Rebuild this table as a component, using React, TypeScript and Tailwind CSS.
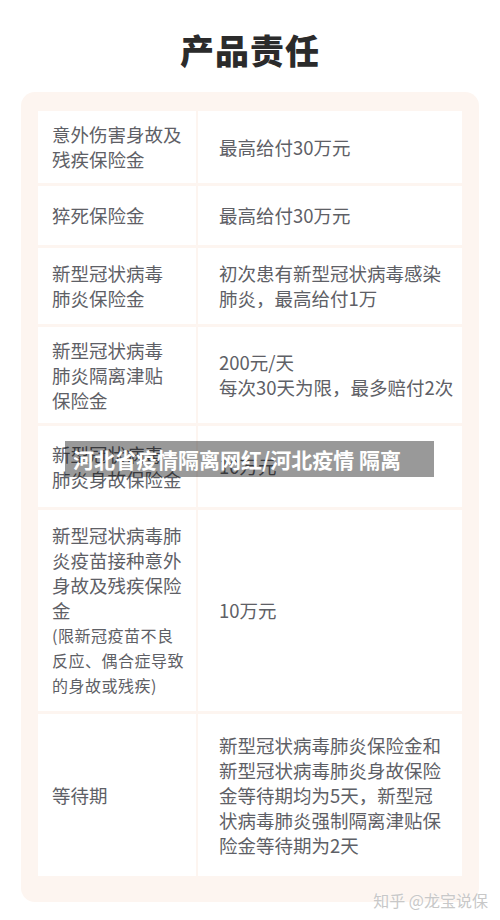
const rows: { left: string[]; right: string[]; h: string; extra?: string[] }[] = [
  { left: ['意外伤害身故及', '残疾保险金'], right: ['最高给付30万元'], h: 'h-[72px]' },
  { left: ['猝死保险金'], right: ['最高给付30万元'], h: 'h-[59px]' },
  { left: ['新型冠状病毒', '肺炎保险金'], right: ['初次患有新型冠状病毒感染', '肺炎，最高给付1万'], h: 'h-[76px]' },
  { left: ['新型冠状病毒', '肺炎隔离津贴', '保险金'], right: ['200元/天', '每次30天为限，最多赔付2次'], h: 'h-[96px]' },
  { left: ['新型冠状病毒', '肺炎身故保险金'], right: ['10万元'], h: 'h-[81px]' },
  {
    left: ['新型冠状病毒肺', '炎疫苗接种意外', '身故及残疾保险', '金'],
    extra: ['(限新冠疫苗不良', '反应、偶合症导致', '的身故或残疾)'],
    right: ['10万元'],
    h: 'h-[201px]',
  },
  {
    left: ['等待期'],
    right: ['新型冠状病毒肺炎保险金和', '新型冠状病毒肺炎身故保险', '金等待期均为5天，新型冠', '状病毒肺炎强制隔离津贴保', '险金等待期为2天'],
    h: 'h-[162px]',
  },
];

export default function App() {
  return (
    <div
      className="relative w-[500px] h-[920px] overflow-hidden bg-white"
      style={{ fontFamily: '"Noto Sans CJK SC", "Noto Sans", sans-serif' }}
    >
      {/* Title */}
      <h1 className="pt-[33px] mb-[25px] text-center text-[34px] leading-[34px] font-black text-[#2b2b2b] tracking-[1px]">
        产品责任
      </h1>

      {/* Card */}
      <div className="mx-[21px] rounded-[14px] bg-[#fdf5f0] pt-[19px] px-[17px] pb-[26px]">
        <div className="flex flex-col gap-[3px]">
          {rows.map((r, i) => (
            <div key={i} className={`flex ${r.h} gap-[2px]`}>
              <div className="w-[158px] bg-white flex flex-col justify-center pl-[14px] text-[18.5px] leading-[25px] text-[#5e6066] whitespace-nowrap">
                {r.left.map((t, j) => (
                  <div key={j}>{t}</div>
                ))}
                {r.extra?.map((t, j) => (
                  <div key={'e' + j} className="text-[16px] leading-[25px] tracking-[0.5px]">
                    {t}
                  </div>
                ))}
              </div>
              <div className="flex-1 bg-white flex flex-col justify-center pl-[21px] text-[18.5px] leading-[25px] text-[#5e6066] whitespace-nowrap">
                {r.right.map((t, j) => (
                  <div key={j}>{t}</div>
                ))}
              </div>
            </div>
          ))}
        </div>
      </div>

      {/* Overlay caption */}
      <div className="absolute top-[441px] left-[65px] w-[369px] h-[36px] bg-black/40 flex items-center pl-[8px]">
        <span className="text-white text-[21px] leading-[24px] font-bold whitespace-nowrap">
          河北省疫情隔离网红/河北疫情 隔离
        </span>
      </div>

      {/* Watermark */}
      <div className="absolute top-[889px] right-[12px] text-[16px] leading-[22px] text-[#c8c8c8] whitespace-nowrap [text-shadow:0_0_2px_#ffffff]">
        知乎 @龙宝说保
      </div>
    </div>
  );
}
